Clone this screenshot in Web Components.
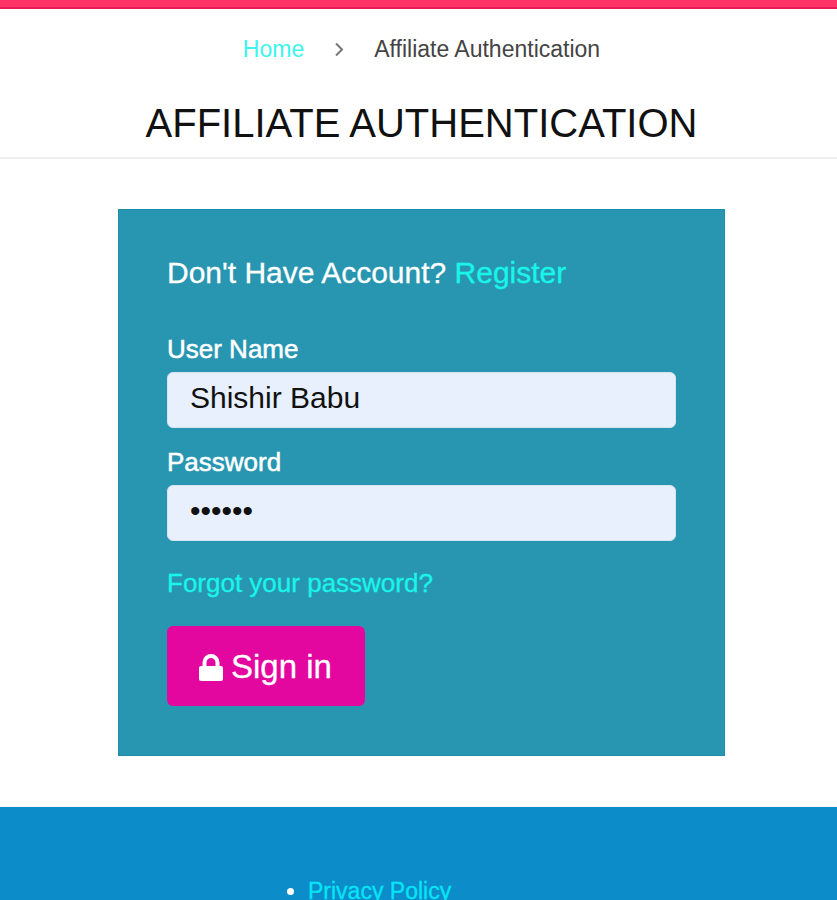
<!DOCTYPE html>
<html lang="en">
<head>
<meta charset="utf-8">
<meta name="viewport" content="width=device-width, initial-scale=1">
<title>Affiliate Authentication</title>
<style>
  html { scrollbar-width: none; }
  body { margin: 0; background: #fff; font-family: "Liberation Sans", Arial, sans-serif; color: #111; }
</style>
</head>
<body>
<affiliate-page></affiliate-page>
<script>
  class Base extends HTMLElement {
    constructor() {
      super();
      this.attachShadow({ mode: "open" }).innerHTML =
        "<style>*{box-sizing:border-box}" + this.constructor.css + "</style>" + this.render();
    }
  }

  customElements.define("text-link", class extends Base {
    static css = `
      :host { display: inline; }
      a { color: var(--link, #19f5e9); text-decoration: none; }
      a:hover { text-decoration: underline; }`;
    render() { return `<a href="${this.getAttribute("href") || "#"}"><slot></slot></a>`; }
  });

  customElements.define("bread-crumb", class extends Base {
    static css = `
      :host { display: block; font-size: 23px; line-height: 32px; color: #444; --link: #3cf5ec; }
      ol { display: flex; justify-content: center; align-items: center; gap: 31px; margin: 0; padding: 0; list-style: none; }
      li { display: flex; align-items: center; }
      svg { display: block; }`;
    render() {
      return `<nav aria-label="Breadcrumb"><ol>
        <li><slot name="parent"></slot></li>
        <li aria-hidden="true"><svg width="8" height="14" viewBox="0 0 8 14" fill="none" stroke="#777" stroke-width="2"><path d="M1 1.5 7 7.5 1 13.5"/></svg></li>
        <li aria-current="page"><slot></slot></li>
      </ol></nav>`;
    }
  });

  customElements.define("page-title", class extends Base {
    static css = `
      :host { display: block; padding: 34px 0 10px 6px; border-bottom: 2px solid #eee; }
      h1 { margin: 0; font-size: 40px; line-height: 48px; font-weight: 400; text-align: center; text-transform: uppercase; }`;
    render() { return `<h1><slot></slot></h1>`; }
  });

  customElements.define("form-field", class extends Base {
    static css = `
      :host { display: block; }
      label { display: block; font-size: 26px; line-height: 32px; padding-bottom: 7px; color: #fff; -webkit-text-stroke: 0.5px #fff; }
      input { display: block; width: 100%; height: 56px; padding: 0 22px 4px; border: 1px solid #d5e4f0; border-radius: 6px;
        background: #e8f0fe; color: #111; font: 30px "Liberation Sans", Arial, sans-serif; outline: none; }`;
    render() {
      const a = n => this.getAttribute(n) || "";
      return `<label for="field">${a("label")}</label>
        <input id="field" type="${a("type")}" value="${a("value")}" autocomplete="off">`;
    }
  });

  customElements.define("sign-in-button", class extends Base {
    static css = `
      :host { display: block; }
      button { display: inline-flex; align-items: center; gap: 8px; height: 80px; padding: 2px 33px 0 32px; border: 0; border-radius: 6px;
        background: #e4079f; color: #fff; font: 33px "Liberation Sans", Arial, sans-serif; -webkit-text-stroke: 0.3px; cursor: pointer; }
      svg { display: block; }`;
    render() {
      return `<button type="button">
        <svg width="24" height="27" viewBox="0 0 24 27" aria-hidden="true">
          <path d="M5.5 14V8.5a6.5 6.5 0 0 1 13 0V14" fill="none" stroke="#fff" stroke-width="4"/>
          <rect y="12" width="24" height="15" rx="2" fill="#fff"/>
        </svg><slot></slot></button>`;
    }
  });

  customElements.define("login-card", class extends Base {
    static css = `
      :host { display: block; padding: 47px 48px 49px; background: #2896b1;
        border: 1px solid #1b8fa9; color: #fff; }
      .lead { margin: 0; font-size: 30px; line-height: 32px; -webkit-text-stroke: 0.3px; }
      form { display: grid; gap: 18px; margin-top: 44px; }
      .forgot { font-size: 26px; line-height: 32px; padding: 8px 0 9px; -webkit-text-stroke: 0.3px; }`;
    render() {
      return `<p class="lead">Don't Have Account? <text-link>Register</text-link></p>
        <form>
          <form-field label="User Name" type="text" value="Shishir Babu"></form-field>
          <form-field label="Password" type="password" value="secret"></form-field>
          <div class="forgot"><text-link>Forgot your password?</text-link></div>
          <sign-in-button>Sign in</sign-in-button>
        </form>`;
    }
  });

  customElements.define("page-footer", class extends Base {
    static css = `
      :host { display: block; padding: 67px 24px 0 268px; background: #0c8cc9; color: #fff; --link: #05e5f5; }
      ul { margin: 0; padding: 0 0 0 40px; font-size: 23px; line-height: 34px; -webkit-text-stroke: 0.3px; }`;
    render() { return `<ul><li><text-link>Privacy Policy</text-link></li></ul>`; }
  });

  customElements.define("affiliate-page", class extends Base {
    static css = `
      :host { display: flex; flex-direction: column; min-height: 100vh; }
      .bar { height: 9px; background: #ff3366; border-bottom: 2px solid #ea1a57; }
      .crumbs { padding: 24px 0 0 6px; }
      main { display: grid; justify-content: center; grid-template-columns: minmax(0, 607px); padding: 50px 0 51px 6px; }
      page-footer { flex: 1; }`;
    render() {
      return `<div class="bar"></div>
        <header>
          <bread-crumb class="crumbs"><text-link slot="parent">Home</text-link>Affiliate Authentication</bread-crumb>
          <page-title>Affiliate Authentication</page-title>
        </header>
        <main><login-card></login-card></main>
        <page-footer></page-footer>`;
    }
  });
</script>
</body>
</html>
